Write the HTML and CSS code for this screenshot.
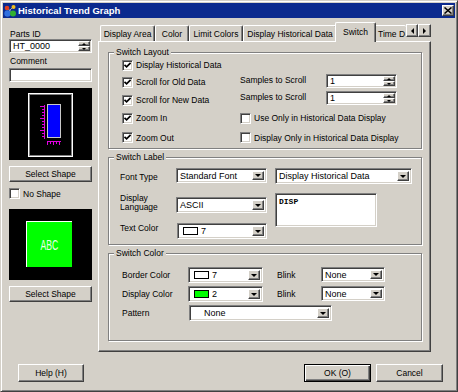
FILE: index.html
```html
<!DOCTYPE html>
<html lang="en">
<head>
    <meta charset="UTF-8">
    <title>Historical Trend Graph</title>
    <link rel="stylesheet" href="styles.css">
</head>
<body>

<div class="window">
    <div class="titlebar">
        <svg class="app-icon" width="14" height="14" viewBox="0 0 14 14">
            <path d="M4 4 L10 9 M10 3 L4 9" stroke="#a0a8b0" stroke-width="1"/>
            <circle cx="4" cy="4" r="2.3" fill="#e04020"/>
            <circle cx="10.5" cy="3" r="2" fill="#f0c020"/>
            <circle cx="4.5" cy="9.5" r="3.2" fill="#3070e0"/>
            <circle cx="10" cy="9.5" r="3" fill="#30b030"/>
        </svg>
        <span class="title">Historical Trend Graph</span>
        <button class="close-btn">
            <svg width="8" height="7" viewBox="0 0 8 7"><path d="M0.5 0.5 L7.5 6.5 M7.5 0.5 L0.5 6.5" stroke="#000" stroke-width="1.5"/></svg>
        </button>
    </div>

    <div class="main">
        <!-- left column: parts id, comment, previews -->
        <div class="side">
            <div class="side-label">Parts ID</div>
            <div class="spin parts-id">
                <span class="field-value">HT_0000</span>
                <span class="spin-buttons">
                    <span class="spin-btn"><span class="arrow-up"></span></span>
                    <span class="spin-btn"><span class="arrow-down small"></span></span>
                </span>
            </div>
            <div class="side-label comment">Comment</div>
            <div class="sunken comment-field"></div>

            <div class="preview">
                <svg width="83" height="72" viewBox="0 0 83 72">
                    <rect x="19.5" y="5.5" width="44" height="63" fill="none" stroke="#ffffff"/>
                    <rect x="20.5" y="6.5" width="42" height="61" fill="none" stroke="#808080"/>
                    <rect x="38.5" y="16.5" width="13" height="33" fill="#0000ff" stroke="#c8c8c8"/>
                    <path d="M35.5 17 V51 M31 18.5 H35 M33 21.5 H35 M33 24.5 H35 M33 27.5 H35 M31 30.5 H35 M33 33.5 H35 M33 36.5 H35 M33 39.5 H35 M31 42.5 H35 M33 45.5 H35 M33 48.5 H35" stroke="#e000e0" stroke-width="1"/>
                    <path d="M38 53.5 H52 M38.5 54 V57 M41.5 54 V56 M44.5 54 V57 M47.5 54 V56 M50.5 54 V57" stroke="#e000e0" stroke-width="1"/>
                </svg>
            </div>
            <button class="btn select-shape">Select Shape</button>
            <div class="check no-shape"><span class="box"></span>No Shape</div>
            <div class="preview sample">
                <div class="sample-switch"><span class="sample-text">ABC</span></div>
            </div>
            <button class="btn select-shape">Select Shape</button>
        </div>

        <!-- tab control -->
        <div class="tabctl">
            <div class="tab-strip">
                <div class="tab-list">
                    <div class="tab w-area">Display Area</div>
                    <div class="tab w-color">Color</div>
                    <div class="tab w-limit">Limit Colors</div>
                    <div class="tab w-hist">Display Historical Data</div>
                    <div class="tab active w-switch">Switch</div>
                    <div class="tab clipped">Time D</div>
                </div>
                <div class="tab-scroll">
                    <button class="scroll-btn"><span class="arrow-left"></span></button>
                    <button class="scroll-btn"><span class="arrow-right"></span></button>
                </div>
            </div>

            <div class="tab-panel">
                <fieldset class="group">
                    <legend>Switch Layout</legend>
                    <div class="layout-grid">
                        <div class="check r1"><span class="box checked"></span>Display Historical Data</div>
                        <div class="check r2"><span class="box checked"></span>Scroll for Old Data</div>
                        <div class="scroll-row r2 first">
                            <span class="scroll-label">Samples to Scroll</span>
                            <div class="spin samples">
                                <span class="field-value">1</span>
                                <span class="spin-buttons">
                                    <span class="spin-btn"><span class="arrow-up"></span></span>
                                    <span class="spin-btn"><span class="arrow-down small"></span></span>
                                </span>
                            </div>
                        </div>
                        <div class="check r3"><span class="box checked"></span>Scroll for New Data</div>
                        <div class="scroll-row r3 second">
                            <span class="scroll-label">Samples to Scroll</span>
                            <div class="spin samples">
                                <span class="field-value">1</span>
                                <span class="spin-buttons">
                                    <span class="spin-btn"><span class="arrow-up"></span></span>
                                    <span class="spin-btn"><span class="arrow-down small"></span></span>
                                </span>
                            </div>
                        </div>
                        <div class="check r4"><span class="box checked"></span>Zoom In</div>
                        <div class="check r4 right"><span class="box"></span>Use Only in Historical Data Display</div>
                        <div class="check r5"><span class="box checked"></span>Zoom Out</div>
                        <div class="check r5 right"><span class="box"></span>Display Only in Historical Data Display</div>
                    </div>
                </fieldset>

                <fieldset class="group label-group">
                    <legend>Switch Label</legend>
                    <div class="label-grid">
                        <span class="lbl font-type">Font Type</span>
                        <div class="combo font-combo">
                            <span class="combo-value">Standard Font</span>
                            <span class="drop"><span class="arrow-down"></span></span>
                        </div>
                        <div class="combo label-combo">
                            <span class="combo-value">Display Historical Data</span>
                            <span class="drop"><span class="arrow-down"></span></span>
                        </div>

                        <span class="lbl two-line">Display<br>Language</span>
                        <div class="combo lang-combo">
                            <span class="combo-value">ASCII</span>
                            <span class="drop"><span class="arrow-down"></span></span>
                        </div>
                        <div class="sunken text-box">DISP</div>

                        <span class="lbl text-color">Text Color</span>
                        <div class="combo color-combo">
                            <span class="swatch white"></span>
                            <span class="combo-value">7</span>
                            <span class="drop"><span class="arrow-down"></span></span>
                        </div>
                    </div>
                </fieldset>

                <fieldset class="group color-group">
                    <legend>Switch Color</legend>
                    <div class="color-grid">
                        <span class="lbl">Border Color</span>
                        <div class="combo">
                            <span class="swatch white"></span>
                            <span class="combo-value">7</span>
                            <span class="drop"><span class="arrow-down"></span></span>
                        </div>
                        <span class="lbl blink">Blink</span>
                        <div class="combo blink-combo">
                            <span class="combo-value">None</span>
                            <span class="drop"><span class="arrow-down"></span></span>
                        </div>

                        <span class="lbl">Display Color</span>
                        <div class="combo">
                            <span class="swatch green"></span>
                            <span class="combo-value">2</span>
                            <span class="drop"><span class="arrow-down"></span></span>
                        </div>
                        <span class="lbl blink">Blink</span>
                        <div class="combo blink-combo">
                            <span class="combo-value">None</span>
                            <span class="drop"><span class="arrow-down"></span></span>
                        </div>

                        <span class="lbl">Pattern</span>
                        <div class="combo pattern-combo">
                            <span class="combo-value">None</span>
                            <span class="drop"><span class="arrow-down"></span></span>
                        </div>
                    </div>
                </fieldset>
            </div>
        </div>
    </div>

    <div class="footer">
        <button class="btn help">Help (H)</button>
        <span class="spacer"></span>
        <button class="btn default">OK (O)</button>
        <button class="btn cancel">Cancel</button>
    </div>
</div>

</body>
</html>
```

FILE: styles.css
```css
* {
    box-sizing: border-box;
}
body {
    margin: 0;
    background: #d4d0c8;
    font-family: "Liberation Sans", Arial, sans-serif;
    font-size: 8.5px;
    color: #000;
}
button {
    font: inherit;
    color: #000;
    padding: 0;
    margin: 0;
}

/* window frame */
.window {
    width: 458px;
    height: 392px;
    background: #d4d0c8;
    border: 1px solid;
    border-color: #d4d0c8 #404040 #404040 #d4d0c8;
    box-shadow: inset 1px 1px #fff, inset -1px -1px #808080;
    padding: 2px;
    display: flex;
    flex-direction: column;
}
.titlebar {
    height: 15px;
    background: #0b2a8e;
    color: #fff;
    display: flex;
    align-items: center;
    padding-right: 1px;
}
.app-icon {
    flex: none;
}
.title {
    flex: 1;
    margin-left: 1px;
    font-weight: bold;
    font-size: 9.5px;
}
.close-btn {
    width: 12px;
    height: 11px;
    background: #d4d0c8;
    border: 1px solid;
    border-color: #fff #404040 #404040 #fff;
    box-shadow: inset -1px -1px #808080;
    display: flex;
    align-items: center;
    justify-content: center;
}

/* 3d helpers */
.sunken {
    background: #fff;
    border: 1px solid;
    border-color: #808080 #fff #fff #808080;
    box-shadow: inset 1px 1px #404040, inset -1px -1px #d4d0c8;
}
.btn {
    background: #d4d0c8;
    border: 1px solid;
    border-color: #fff #404040 #404040 #fff;
    box-shadow: inset -1px -1px #808080;
    cursor: pointer;
}
.btn.default {
    border-color: #000;
    box-shadow: inset 1px 1px #fff, inset -1px -1px #404040, inset -2px -2px #808080;
}

.main {
    display: flex;
    height: 334px;
    padding: 4px 0 0 6px;
}

/* left column */
.side {
    width: 83px;
    margin-top: 7px;
    display: flex;
    flex-direction: column;
}
.side-label {
    height: 10px;
    line-height: 10px;
    padding-left: 1px;
}
.side-label.comment {
    height: 11px;
    line-height: 11px;
    margin-top: 3px;
}
.comment-field {
    height: 14px;
    margin-top: 1px;
}
.preview {
    height: 72px;
    margin-top: 6px;
    background: #000;
}
.preview svg {
    display: block;
}
.preview.sample {
    height: 71px;
    margin-top: 10px;
    padding: 12px 0 0 17px;
}
.sample-switch {
    width: 46px;
    height: 46px;
    background: #00ff00;
    border-top: 1px solid #fff;
    border-left: 1px solid #fff;
    display: flex;
    align-items: center;
    justify-content: center;
}
.sample-text {
    color: #e8ffe8;
    font-size: 14px;
    transform: scaleX(0.62);
}
.select-shape {
    height: 16px;
    margin-top: 6px;
}
.no-shape {
    height: 11px;
    margin-top: 6px;
}

/* spin boxes */
.spin {
    display: flex;
    align-items: stretch;
    height: 14px;
    background: #fff;
    border: 1px solid;
    border-color: #808080 #fff #fff #808080;
    box-shadow: inset 1px 1px #404040, inset -1px -1px #d4d0c8;
    padding: 1px;
}
.field-value {
    flex: 1;
    padding-left: 2px;
    line-height: 10px;
    font-size: 9px;
}
.spin-buttons {
    width: 12px;
    display: flex;
    flex-direction: column;
}
.spin-btn {
    flex: 1;
    background: #d4d0c8;
    border: 1px solid;
    border-color: #fff #404040 #404040 #fff;
    box-shadow: inset -1px -1px #808080;
    display: flex;
    align-items: center;
    justify-content: center;
}

/* arrows */
.arrow-down {
    width: 0;
    height: 0;
    border-left: 3px solid transparent;
    border-right: 3px solid transparent;
    border-top: 3px solid #000;
}
.arrow-down.small {
    border-left-width: 2px;
    border-right-width: 2px;
    border-top-width: 2px;
}
.arrow-up {
    width: 0;
    height: 0;
    border-left: 2px solid transparent;
    border-right: 2px solid transparent;
    border-bottom: 2px solid #000;
}
.arrow-left {
    width: 0;
    height: 0;
    border-top: 3px solid transparent;
    border-bottom: 3px solid transparent;
    border-right: 3px solid #000;
}
.arrow-right {
    width: 0;
    height: 0;
    border-top: 3px solid transparent;
    border-bottom: 3px solid transparent;
    border-left: 3px solid #000;
}

/* checkboxes */
.check {
    display: flex;
    align-items: center;
    white-space: nowrap;
}
.box {
    width: 11px;
    height: 11px;
    flex: none;
    margin-right: 3px;
    background: #fff;
    border: 1px solid;
    border-color: #808080 #fff #fff #808080;
    box-shadow: inset 1px 1px #404040, inset -1px -1px #d4d0c8;
}
.box.checked {
    background: #fff url("data:image/svg+xml;utf8,<svg xmlns='http://www.w3.org/2000/svg' width='9' height='9' viewBox='0 0 9 9'><path d='M1.5 3.8 L3.6 5.9 L7.6 1.9' fill='none' stroke='black' stroke-width='1.7'/></svg>") no-repeat center;
}

/* tab control */
.tabctl {
    width: 333px;
    margin-left: 6px;
    display: flex;
    flex-direction: column;
}
.tab-strip {
    height: 19px;
    display: flex;
    position: relative;
    z-index: 1;
}
.tab-list {
    flex: 1;
    display: flex;
    align-items: flex-end;
    padding-left: 2px;
}
.tab {
    height: 16px;
    background: #d4d0c8;
    border: 1px solid;
    border-bottom: none;
    border-color: #fff #404040 #fff #fff;
    border-radius: 2px 2px 0 0;
    box-shadow: inset -1px 0 #808080;
    display: flex;
    align-items: center;
    justify-content: center;
    white-space: nowrap;
    flex: none;
}
.w-area { width: 55px; }
.w-color { width: 34px; }
.w-limit { width: 54px; }
.w-hist { width: 94px; }
.tab.active {
    width: 41px;
    height: 20px;
    margin: 0 -2px -1px;
    position: relative;
    z-index: 2;
    padding-bottom: 2px;
}
.tab.clipped {
    width: 32px;
    justify-content: flex-start;
    padding-left: 3px;
    border-right: none;
    box-shadow: none;
}
.tab-scroll {
    display: flex;
    margin-top: 2px;
    height: 13px;
}
.scroll-btn {
    width: 12px;
    height: 13px;
    background: #d4d0c8;
    border: 1px solid;
    border-color: #fff #404040 #404040 #fff;
    box-shadow: inset -1px -1px #808080;
    display: flex;
    align-items: center;
    justify-content: center;
}
.scroll-btn + .scroll-btn {
    width: 13px;
}
.tab-panel {
    height: 311px;
    border: 1px solid;
    border-color: #fff #404040 #404040 #fff;
    box-shadow: inset -1px -1px #808080;
    padding: 5px 8px 0 9px;
}

/* group boxes */
.group {
    margin: 0;
    padding: 0 0 1px 0;
    min-width: 0;
    border: 1px solid #808080;
    box-shadow: inset 1px 1px #fff, 1px 1px #fff;
}
.group legend {
    margin-left: 5px;
    padding: 0 2px;
    height: 11px;
    line-height: 11px;
    background: #d4d0c8;
}
.label-group,
.color-group {
    margin-top: 3px;
}

.layout-grid {
    display: grid;
    grid-template-columns: 118px 1fr;
    grid-template-rows: 14px 20px 16px 20px 19px;
    margin-left: 13px;
}
.r1 { grid-row: 1; grid-column: 1 / 3; }
.r2 { grid-row: 2; }
.r3 { grid-row: 3; }
.r4 { grid-row: 4; }
.r5 { grid-row: 5; }
.check.right { grid-column: 2; }
.scroll-row {
    grid-column: 2;
    display: flex;
    align-items: center;
    align-self: start;
}
.scroll-row.first { margin-top: 2px; }
.scroll-row.second { margin-top: -1px; }
.scroll-label {
    width: 86px;
    margin-top: -2px;
}
.spin.samples {
    width: 71px;
}

.label-grid {
    display: grid;
    grid-template-columns: 56px 99px 137px;
    grid-template-rows: 15px 20px 16px;
    row-gap: 10px;
    margin: 5px 0 4px 11px;
}
.lbl {
    white-space: nowrap;
    align-self: center;
}
.font-type { align-self: end; line-height: 11px; }
.two-line { line-height: 9px; }
.text-color { align-self: start; line-height: 11px; }
.combo {
    height: 16px;
    display: flex;
    align-items: stretch;
    background: #fff;
    border: 1px solid;
    border-color: #808080 #fff #fff #808080;
    box-shadow: inset 1px 1px #404040, inset -1px -1px #d4d0c8;
    padding: 2px;
}
.combo-value {
    flex: 1;
    padding-left: 1px;
    white-space: nowrap;
    overflow: hidden;
    line-height: 10px;
    font-size: 9px;
}
.drop {
    width: 12px;
    background: #d4d0c8;
    border: 1px solid;
    border-color: #fff #404040 #404040 #fff;
    box-shadow: inset -1px -1px #808080;
    display: flex;
    align-items: center;
    justify-content: center;
}
.font-combo { width: 91px; height: 15px; }
.lang-combo { width: 91px; align-self: end; }
.color-combo { width: 90px; margin-left: 1px; }
.text-box {
    grid-column: 3;
    grid-row: 2 / 4;
    width: 102px;
    height: 34px;
    padding: 3px 3px;
    font-family: "Liberation Mono", "Courier New", monospace;
    font-size: 8px;
    font-weight: bold;
    line-height: 9px;
}
.swatch {
    width: 15px;
    height: 8px;
    border: 1px solid #000;
    align-self: center;
    margin: 0 2px 0 3px;
    flex: none;
}
.swatch.white { background: #fff; }
.swatch.green { background: #00ff00; }

.color-grid {
    display: grid;
    grid-template-columns: 66px 75px 14px 44px 64px;
    grid-template-rows: 16px 16px 16px;
    row-gap: 3px;
    margin: 8px 0 18px 13px;
}
.color-grid .blink {
    grid-column: 4;
}
.blink-combo {
    grid-column: 5;
    height: 15px;
}
.pattern-combo {
    grid-column: 2 / 6;
    width: 143px;
    margin-left: 1px;
}
.pattern-combo .combo-value {
    padding-left: 12px;
}

/* bottom buttons */
.footer {
    display: flex;
    padding: 12px 12px 0 15px;
}
.footer .btn {
    height: 18px;
    width: 67px;
}
.footer .help {
    width: 66px;
}
.spacer {
    flex: 1;
}
.footer .cancel {
    margin-left: 5px;
}
```
